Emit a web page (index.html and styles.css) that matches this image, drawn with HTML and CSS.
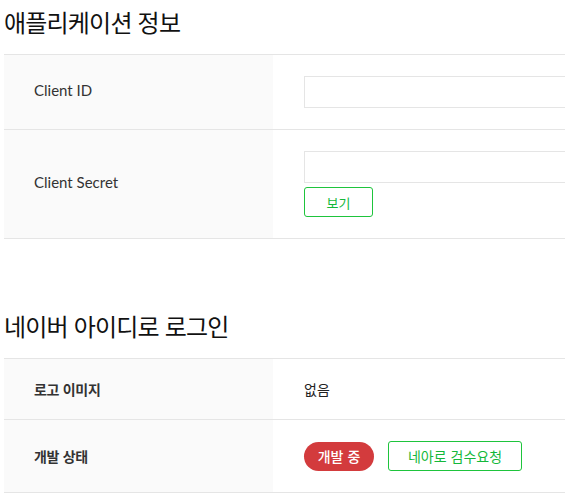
FILE: index.html
```html
<!DOCTYPE html>
<html lang="ko">
<head>
<meta charset="utf-8">
<title>애플리케이션 정보</title>
<link rel="stylesheet" href="styles.css">
</head>
<body>
<div class="page">
  <section class="section">
    <h2 class="title">애플리케이션 정보</h2>
    <table class="info">
      <tr>
        <th class="label label-en">Client ID</th>
        <td class="value"><input class="field" type="text"></td>
      </tr>
      <tr>
        <th class="label label-en">Client Secret</th>
        <td class="value">
          <input class="field" type="text">
          <button class="btn btn-show" type="button">보기</button>
        </td>
      </tr>
    </table>
  </section>
  <section class="section section-second">
    <h2 class="title">네이버 아이디로 로그인</h2>
    <table class="info">
      <tr>
        <th class="label label-ko">로고 이미지</th>
        <td class="value"><span class="text">없음</span></td>
      </tr>
      <tr>
        <th class="label label-ko">개발 상태</th>
        <td class="value">
          <div class="status-row">
            <span class="pill">개발 중</span>
            <button class="btn btn-review" type="button">네아로 검수요청</button>
          </div>
        </td>
      </tr>
    </table>
  </section>
</div>
</body>
</html>
```

FILE: styles.css
```css
html, body {
  margin: 0;
  padding: 0;
  background: #fff;
  overflow: hidden;
}

body {
  font-family: Lato, "Noto Sans CJK KR", sans-serif;
  color: #333;
}

.page {
  width: 900px;
  padding: 6px 0 0 4px;
}

.section-second {
  margin-top: 71px;
}

.title {
  margin: 0 0 16px;
  font-family: "Noto Sans CJK KR", sans-serif;
  font-size: 24px;
  line-height: 32px;
  font-weight: 400;
  color: #111;
  letter-spacing: -0.8px;
}

.info {
  width: 100%;
  border-collapse: collapse;
  border-top: 1px solid #e5e5e5;
}

.info tr {
  border-bottom: 1px solid #e5e5e5;
}

.label {
  width: 209px;
  padding: 21px 30px;
  background: #fafafa;
  text-align: left;
  font-size: 15px;
  line-height: 18px;
  font-weight: 400;
  color: #333;
  vertical-align: middle;
}

.label-en {
  padding-top: 19px;
  padding-bottom: 23px;
}

.label-ko {
  font-family: "Noto Sans CJK KR", sans-serif;
  font-size: 14px;
  font-weight: 700;
  letter-spacing: -0.3px;
}

.value {
  padding: 21px 31px;
  vertical-align: middle;
}

.field {
  display: block;
  box-sizing: border-box;
  width: 100%;
  height: 32px;
  margin: 0;
  border: 1px solid #e5e5e5;
  background: #fff;
  outline: none;
}

.text {
  display: block;
  font-family: "Noto Sans CJK KR", sans-serif;
  font-size: 14px;
  line-height: 18px;
  color: #222;
}

.btn {
  box-sizing: border-box;
  height: 30px;
  margin: 0;
  padding: 0;
  border: 1px solid #1ec43c;
  border-radius: 3px;
  background: #fff;
  color: #14b83a;
  font-family: "Noto Sans CJK KR", sans-serif;
  font-size: 13px;
  cursor: pointer;
}

.btn-show {
  display: block;
  width: 69px;
  margin-top: 4px;
}

.btn-review {
  width: 134px;
  font-size: 14px;
}

.status-row {
  display: flex;
  align-items: center;
  gap: 14px;
}

.pill {
  display: inline-flex;
  align-items: center;
  justify-content: center;
  width: 70px;
  height: 29px;
  border-radius: 15px;
  background: #d33b3d;
  color: #fff;
  font-family: "Noto Sans CJK KR", sans-serif;
  font-size: 14px;
  font-weight: 500;
}
```
